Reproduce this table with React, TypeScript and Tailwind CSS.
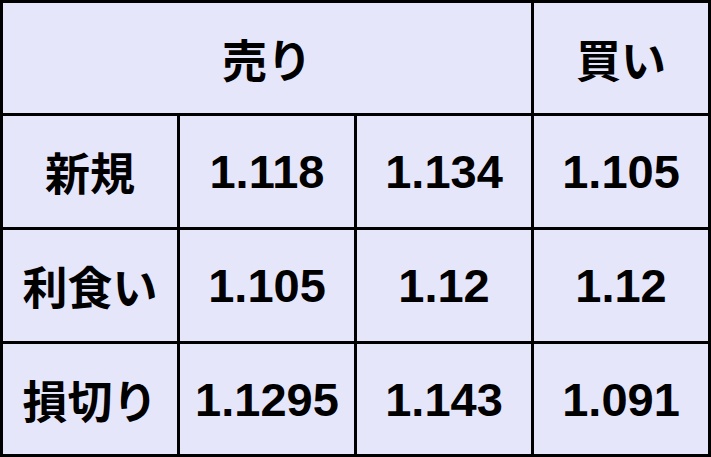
import React from "react";

const jp = "font-['Noto_Sans_CJK_JP','Noto_Sans',sans-serif] font-bold text-[45px]";
const num = "font-['Liberation_Sans',Arial,sans-serif] font-bold text-[47px]";

function Cell({ children, cls, span }: { children: React.ReactNode; cls: string; span?: boolean }) {
  return (
    <div
      className={`flex items-center justify-center bg-[#e6e6fa] text-black leading-none ${cls} ${span ? "col-span-3" : ""}`}
    >
      {children}
    </div>
  );
}

export default function App() {
  const rows: [string, string, string, string][] = [
    ["新規", "1.118", "1.134", "1.105"],
    ["利食い", "1.105", "1.12", "1.12"],
    ["損切り", "1.1295", "1.143", "1.091"],
  ];
  return (
    <div className="w-[711px] h-[457px] bg-black p-[3px] grid grid-cols-[174px_174px_174px_174px] grid-rows-[110px_111px_111px_110px] gap-[3px]">
      <Cell cls={jp} span>
        売り
      </Cell>
      <Cell cls={jp}>買い</Cell>
      {rows.map((r) => (
        <React.Fragment key={r[0]}>
          <Cell cls={jp}>{r[0]}</Cell>
          <Cell cls={num}>{r[1]}</Cell>
          <Cell cls={num}>{r[2]}</Cell>
          <Cell cls={num}>{r[3]}</Cell>
        </React.Fragment>
      ))}
    </div>
  );
}
